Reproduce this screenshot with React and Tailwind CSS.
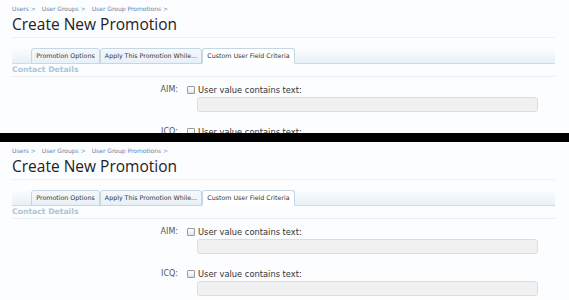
import React from "react";

const crumbs = ["Users", "User Groups", "User Group Promotions"];
const tabs = [
  { label: "Promotion Options", w: "w-[69px]" },
  { label: "Apply This Promotion While...", w: "w-[102px]" },
  { label: "Custom User Field Criteria", w: "w-[93px]", active: true },
];
const fields = ["AIM:", "ICQ:"];

const Field = ({ label, first }) => (
  <div className={`flex ${first ? "mt-[8px]" : "mt-[15px]"}`}>
    <div className="w-[166px] text-right text-[8px] leading-[10px] text-[#555]">{label}</div>
    <div className="ml-[9px]">
      <div className="flex items-center h-[10px]">
        <span className="block w-[8px] h-[8px] border border-[#9a9a9a] rounded-[1px] bg-gradient-to-b from-white to-[#e4e4e4]" />
        <span className="ml-[3px] text-[8.3px] leading-[10px] text-[#333]">User value contains text:</span>
      </div>
      <div className="ml-[10px] mt-[2px] w-[341px] h-[15px] bg-[#f1f1f1] border border-[#dddddd] rounded-[3px]" />
    </div>
  </div>
);

const Page = () => (
  <div className="bg-[#fcfdfe] pl-3 pr-[14px] pt-[4px] h-[300px]" style={{ fontFamily: '"DejaVu Sans", sans-serif' }}>
    <div className="flex text-[6px] leading-[9px] text-[#6584a6]">
      {crumbs.map((c) => (
        <span key={c} className="mr-[6px]">
          {c} &gt;
        </span>
      ))}
    </div>
    <h1
      className="mt-[1px] pb-[3px] border-b border-[#edf1f5] text-[15.5px] leading-[20px] text-[#222]"
      style={{ fontFamily: '"Open Sans", sans-serif' }}
    >
      Create New Promotion
    </h1>
    <div className="mt-[9px] h-[17px] flex items-end pl-[19px] bg-gradient-to-b from-[#fdfeff] to-[#e8f0f7] border-b border-[#cddde8]">
      {tabs.map((t) => (
        <div
          key={t.label}
          className={`${t.w} h-[16px] -mb-px flex items-center justify-center text-[6.3px] text-[#333] border border-[#c6d7e4] rounded-t-[3px] ${
            t.active ? "bg-white border-b-white" : "bg-gradient-to-b from-[#f5f8fc] to-[#e8f0f7]"
          }`}
        >
          {t.label}
        </div>
      ))}
    </div>
    <div className="pb-[1px] border-b border-[#e7eef4] text-[7.7px] font-bold leading-[11px] text-[#aac6db]">Contact Details</div>
    {fields.map((f, i) => (
      <Field key={f} label={f} first={i === 0} />
    ))}
  </div>
);

export default function App() {
  return (
    <div className="w-[569px] h-[300px] overflow-hidden bg-[#fcfdfe]">
      <div className="h-[133px] overflow-hidden">
        <Page />
      </div>
      <div className="h-[9px] bg-black" />
      <div className="h-[158px] overflow-hidden">
        <Page />
      </div>
    </div>
  );
}
